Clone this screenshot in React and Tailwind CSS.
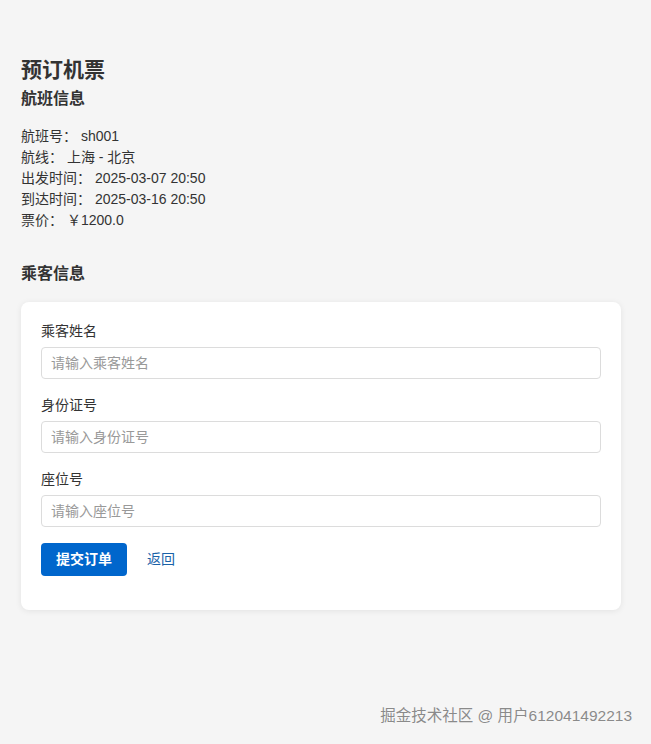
export default function App() {
  const font = { fontFamily: '"Liberation Sans", "Noto Sans CJK SC", sans-serif' };
  return (
    <div className="relative min-h-[744px] bg-[#f5f5f5] text-[#333]" style={font}>
      <div className="w-[600px] ml-[21px] pt-[56px]">
        <h1 className="text-[21px] leading-[28px] font-bold">预订机票</h1>
        <h2 className="mt-[3px] text-[16px] leading-[24px] font-bold">航班信息</h2>
        <div className="mt-[15px] text-[14px] leading-[21px]">
          <p>航班号：&nbsp;sh001</p>
          <p>航线：&nbsp;上海 - 北京</p>
          <p>出发时间：&nbsp;2025-03-07 20:50</p>
          <p>到达时间：&nbsp;2025-03-16 20:50</p>
          <p>票价：&nbsp;￥1200.0</p>
        </div>
        <h2 className="mt-[31px] text-[16px] leading-[24px] font-bold">乘客信息</h2>
        <div className="mt-[16px] bg-white rounded-[8px] shadow-[0_1px_6px_rgba(0,0,0,0.08)] px-[20px] pt-[19px] pb-[34px]">
          {[
            ["乘客姓名", "请输入乘客姓名"],
            ["身份证号", "请输入身份证号"],
            ["座位号", "请输入座位号"],
          ].map(([label, ph]) => (
            <div key={label} className="mb-[16px]">
              <label className="block text-[14px] leading-[21px] text-[#333]">{label}</label>
              <input
                className="mt-[5px] block w-full h-[32px] border border-[#dcdcdc] rounded-[4px] px-[9px] text-[14px] placeholder:text-[#999] outline-none"
                placeholder={ph}
                style={font}
              />
            </div>
          ))}
          <div className="flex items-center gap-[20px]">
            <button className="h-[33px] px-[15px] bg-[#0066cc] text-white text-[14px] font-semibold rounded-[4px]" style={font}>
              提交订单
            </button>
            <a className="text-[14px] text-[#1a62a8]">返回</a>
          </div>
        </div>
      </div>
      <div className="absolute right-[19px] top-[705px] text-[15.5px] leading-[22px] text-[#8a8a8a] [text-shadow:0_0_1px_#fff]">
        掘金技术社区 @ 用户612041492213
      </div>
    </div>
  );
}
